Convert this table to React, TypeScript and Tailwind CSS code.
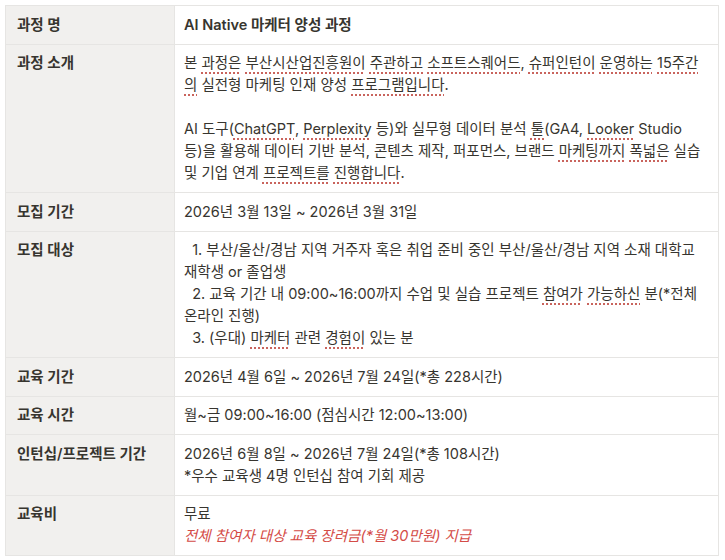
import type { ReactNode } from 'react';

const font = { fontFamily: 'Inter, "Noto Sans CJK KR", sans-serif' };

function Sp({ children }: { children: ReactNode }) {
  return (
    <span className="underline decoration-dotted decoration-[#c9645d] decoration-2 underline-offset-[4px]">
      {children}
    </span>
  );
}

function Row({ label, children }: { label: string; children: ReactNode }) {
  return (
    <tr>
      <td className="w-[169px] border border-[#e6e5e3] bg-[#f1f0ee] px-[11px] pt-[7.5px] pb-[8px] align-top font-semibold">
        {label}
      </td>
      <td className="border border-[#e6e5e3] bg-white pl-[9px] pr-[4px] pt-[7.5px] pb-[8px] align-top whitespace-pre">{children}</td>
    </tr>
  );
}

export default function App() {
  return (
    <div className="min-h-[560px] w-[725px] bg-white pl-[5px] pt-[5px]" style={font}>
      <table className="w-[714px] table-fixed border-collapse text-[14.5px] leading-[22px] text-[#37352f]">
        <tbody>
          <Row label="과정 명">
            <span className="font-semibold">AI Native 마케터 양성 과정</span>
          </Row>
          <Row label="과정 소개">
            본 <Sp>과정은</Sp> <Sp>부산시산업진흥원이</Sp> <Sp>주관하고</Sp> <Sp>소프트스퀘어드</Sp>, <Sp>슈퍼인턴이</Sp> <Sp>운영하는</Sp> <Sp>15주간</Sp>
            <br />
            <Sp>의</Sp> 실전형 마케팅 인재 양성 <Sp>프로그램입니다</Sp>.
            <br />
            <br />
            AI 도구(<Sp>ChatGPT</Sp>, <Sp>Perplexity</Sp> 등)와 실무형 데이터 분석 <Sp>툴</Sp>(GA4, <Sp>Looker</Sp> Studio
            <br />
            등)을 활용해 데이터 기반 분석, 콘텐츠 제작, 퍼포먼스, 브랜드 <Sp>마케팅까지</Sp> <Sp>폭넓은</Sp> 실습
            <br />
            및 기업 연계 <Sp>프로젝트를</Sp> <Sp>진행합니다</Sp>.
          </Row>
          <Row label="모집 기간">2026년 3월 13일 ~ 2026년 3월 31일</Row>
          <Row label="모집 대상">
            {'  1. 부산/울산/경남 지역 거주자 혹은 취업 준비 중인 부산/울산/경남 지역 소재 대학교'}
            <br />
            재학생 or 졸업생
            <br />
            {'  2. 교육 기간 내 09:00~16:00까지 수업 및 실습 프로젝트 '}
            <Sp>참여가</Sp> <Sp>가능하신</Sp> 분(*전체
            <br />
            온라인 진행)
            <br />
            {'  3. (우대) '}
            <Sp>마케터</Sp> 관련 <Sp>경험이</Sp> 있는 분
          </Row>
          <Row label="교육 기간">2026년 4월 6일 ~ 2026년 7월 24일(*총 228시간)</Row>
          <Row label="교육 시간">월~금 09:00~16:00 (점심시간 12:00~13:00)</Row>
          <Row label="인턴십/프로젝트 기간">
            2026년 6월 8일 ~ 2026년 7월 24일(*총 108시간)
            <br />
            *우수 교육생 4명 인턴십 참여 기회 제공
          </Row>
          <Row label="교육비">
            무료
            <br />
            <span className="italic text-[#d44c47]">전체 참여자 대상 교육 장려금(*월 30만원) 지급</span>
          </Row>
        </tbody>
      </table>
    </div>
  );
}
